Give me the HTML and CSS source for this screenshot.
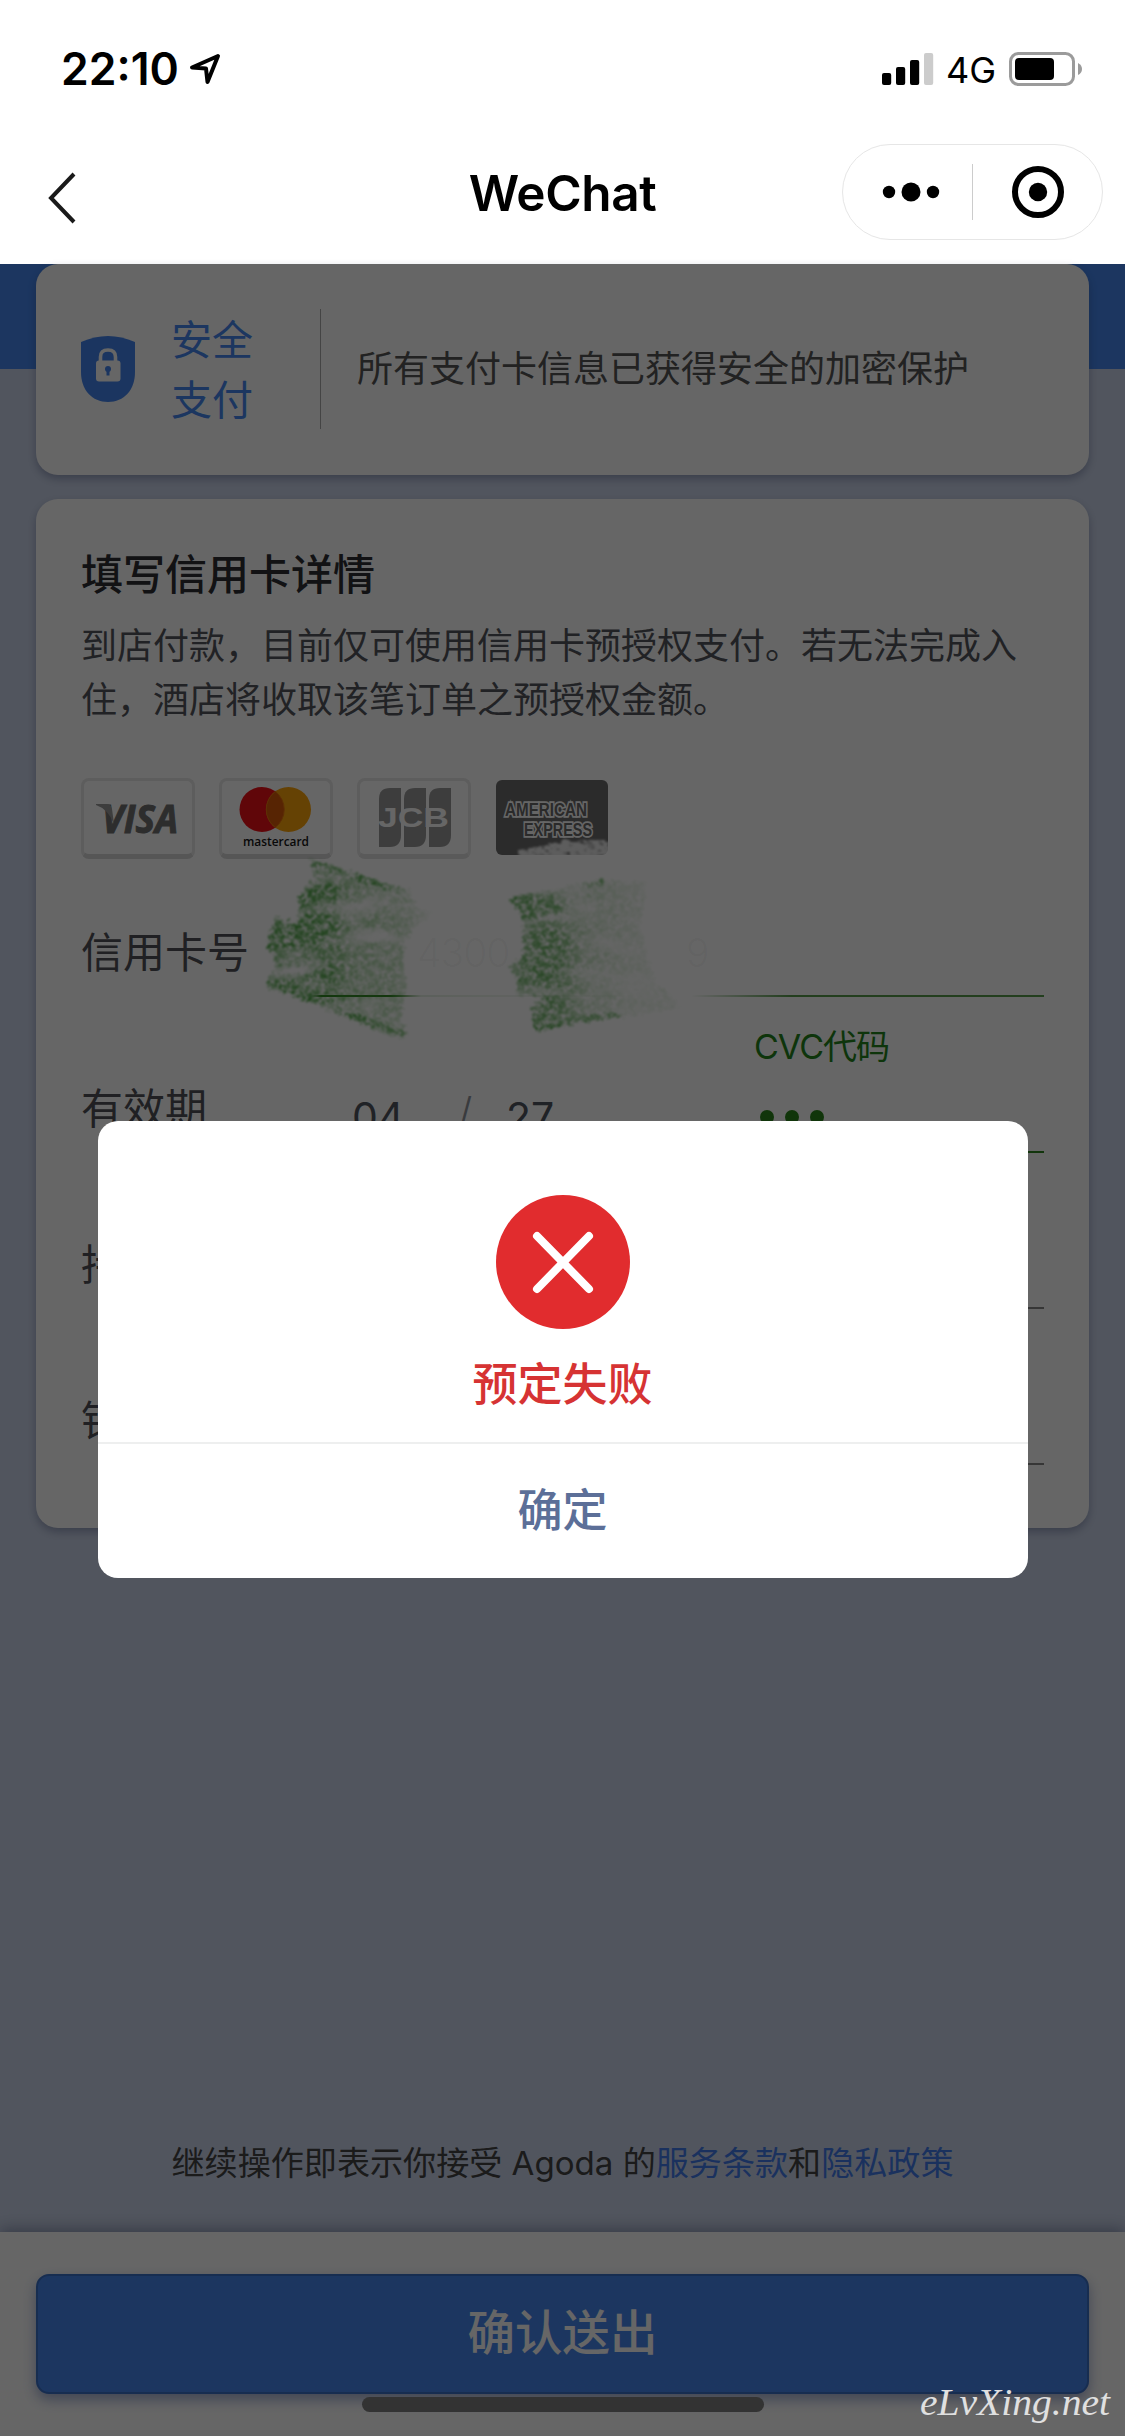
FILE: index.html
```html
<!DOCTYPE html>
<html lang="zh-CN">
<head>
<meta charset="utf-8">
<title>WeChat</title>
<link rel="stylesheet" href="styles.css">
</head>
<body>
<div class="screen">
  <header class="top">
    <div class="status">
      <div class="status-left">
        <span class="time">22:10</span>
        <svg class="locate" width="34" height="34" viewBox="0 0 34 34"><path d="M30 4 L4 15.500 L18 16.500 L19.500 30 Z" fill="none" stroke="#000" stroke-width="4" stroke-linejoin="round"/></svg>
      </div>
      <div class="status-right">
        <svg width="52" height="34" viewBox="0 0 52 34"><rect x="0" y="21" width="9.200" height="12" rx="2"/><rect x="14" y="15" width="9.200" height="18" rx="2"/><rect x="28" y="8" width="9.200" height="25" rx="2"/><rect x="42" y="1" width="9.200" height="32" rx="2" fill="#ccc"/></svg>
        <span class="network">4G</span>
        <svg width="76" height="34" viewBox="0 0 76 34"><rect x="1.500" y="1.500" width="63" height="31" rx="8" fill="none" stroke="#9b9b9b" stroke-width="3"/><rect x="6" y="6" width="39" height="22" rx="4"/><path d="M69 11 Q73 13 73 17 Q73 21 69 23 Z" fill="#9b9b9b"/></svg>
      </div>
    </div>
    <nav class="nav">
      <svg class="back" width="32" height="54" viewBox="0 0 32 54"><path d="M28 3 L5 27 L28 51" fill="none" stroke="#1a1a1a" stroke-width="4"/></svg>
      <h1 class="title">WeChat</h1>
      <div class="capsule">
        <svg class="more" width="58" height="20" viewBox="0 0 58 20"><circle cx="7" cy="10" r="6.200"/><circle cx="29" cy="10" r="9.500"/><circle cx="51" cy="10" r="6.200"/></svg>
        <span class="capsule-line"></span>
        <svg class="target" width="54" height="54" viewBox="0 0 54 54"><circle cx="27" cy="27" r="23" fill="none" stroke="#000" stroke-width="6"/><circle cx="27" cy="27" r="9.200"/></svg>
      </div>
    </nav>
  </header>

  <main class="content">
    <section class="card secure">
      <svg class="shield" width="54" height="66" viewBox="0 0 54 66"><path d="M0 6 Q27 -6 54 6 V36 C54 54 43 66 27 66 C11 66 0 54 0 36 Z" fill="#4485ef"/><rect x="15" y="24.500" width="24.500" height="21" rx="3" fill="#fff"/><path d="M19.500 26 V21 Q19.500 14 27 14 Q34.500 14 34.500 21 V26" fill="none" stroke="#fff" stroke-width="3.600"/><circle cx="27" cy="33" r="3" fill="#4485ef"/><rect x="25.500" y="33" width="3" height="6.500" fill="#4485ef"/></svg>
      <div class="secure-name">安全<br>支付</div>
      <p class="secure-text">所有支付卡信息已获得安全的加密保护</p>
    </section>

    <section class="card details">
      <h2 class="heading">填写信用卡详情</h2>
      <p class="intro">到店付款，目前仅可使用信用卡预授权支付。若无法完成入住，酒店将收取该笔订单之预授权金额。</p>
      <div class="brands">
        <div class="brand">
          <svg width="108" height="74" viewBox="0 0 108 74"><text x="18" y="51.500" class="visa" textLength="76" lengthAdjust="spacingAndGlyphs">VISA</text><path d="M12 23 H22 Q27 23 28 28 L30 43 Q24 28 12 24 Z" fill="#999"/></svg>
        </div>
        <div class="brand">
          <svg width="108" height="74" viewBox="0 0 108 74"><circle cx="40" cy="28.500" r="22.500" fill="#f01018"/><circle cx="66.500" cy="28.500" r="22.500" fill="#fda50c"/><path d="M53.250 10.500 A22.500 22.500 0 0 1 53.250 46.500 A22.500 22.500 0 0 1 53.250 10.500 Z" fill="#d95a08" stroke="#e8740c" stroke-width="1"/><text x="21" y="64.500" class="mastercard" textLength="66" lengthAdjust="spacingAndGlyphs">mastercard</text></svg>
        </div>
        <div class="brand worn">
          <svg width="108" height="74" viewBox="0 0 108 74"><g fill="#999"><path d="M19 18 Q19 7 30 7 H41 V54 Q41 66 30 66 H19 Z"/><path d="M44 18 Q44 7 55 7 H66 V54 Q66 66 55 66 H44 Z"/><path d="M69 18 Q69 7 80 7 H91 V54 Q91 66 80 66 H69 Z"/></g><text x="18" y="46" class="jcb" textLength="71" lengthAdjust="spacingAndGlyphs">JCB</text></svg>
        </div>
        <div class="brand amex">
          <svg width="112" height="80" viewBox="0 0 112 80"><defs><filter id="wear" x="-10%" y="-30%" width="120%" height="160%" color-interpolation-filters="sRGB"><feTurbulence type="fractalNoise" baseFrequency=".12 .3" numOctaves="3" seed="8" result="n"/><feColorMatrix in="n" type="matrix" values="0 0 0 0 0  0 0 0 0 0  0 0 0 0 0  0 0 0 4 -.8" result="m"/><feComposite in="SourceGraphic" in2="m" operator="in" result="c"/><feDisplacementMap in="c" in2="n" scale="10" result="d"/><feGaussianBlur in="d" stdDeviation=".9"/></filter></defs><rect width="112" height="75" rx="6" fill="#6c6c6c"/><g class="amex-text"><text x="9" y="36" textLength="82" lengthAdjust="spacingAndGlyphs">AMERICAN</text><text x="28" y="55.500" textLength="68" lengthAdjust="spacingAndGlyphs">EXPRESS</text></g><path d="M24 70 L48 66 L64 61 L114 62 V82 H22 Z" fill="#fff" opacity=".85" filter="url(#wear)"/></svg>
        </div>
      </div>

      <div class="form">
        <div class="row number">
          <span class="label">信用卡号</span>
          <span class="digits">4300</span><span class="digits last">9</span>
          <svg class="scribble" width="460" height="200" viewBox="250 850 460 200">
            <defs>
              <filter id="chalk" x="-5%" y="-5%" width="110%" height="110%" color-interpolation-filters="sRGB">
                <feTurbulence type="fractalNoise" baseFrequency=".24 .28" numOctaves="3" seed="5" result="n"/>
                <feColorMatrix in="n" type="matrix" values="0 0 0 0 0  0 0 0 0 0  0 0 0 0 0  0 0 0 4.500 -1.650" result="m"/>
                <feTurbulence type="fractalNoise" baseFrequency=".015 .06" numOctaves="2" seed="11" result="w"/>
                <feColorMatrix in="w" type="matrix" values="0 0 0 0 0  0 0 0 0 0  0 0 0 0 0  0 0 0 3 -.55" result="bands"/>
                <feComposite in="SourceGraphic" in2="m" operator="in" result="c"/>
                <feComposite in="c" in2="bands" operator="in" result="b"/>
                <feDisplacementMap in="b" in2="n" scale="10" xChannelSelector="R" yChannelSelector="G" result="d"/>
                <feGaussianBlur in="d" stdDeviation=".8"/>
              </filter>
              <linearGradient id="fadeA" gradientUnits="userSpaceOnUse" x1="266" y1="0" x2="434" y2="0"><stop offset="0" stop-color="#36992c" stop-opacity=".9"/><stop offset=".38" stop-color="#36992c" stop-opacity=".85"/><stop offset=".5" stop-color="#48a33d" stop-opacity=".5"/><stop offset=".8" stop-color="#48a33d" stop-opacity=".38"/><stop offset="1" stop-color="#48a33d" stop-opacity="0"/></linearGradient>
              <linearGradient id="fadeB" gradientUnits="userSpaceOnUse" x1="508" y1="0" x2="682" y2="0"><stop offset="0" stop-color="#3b9931" stop-opacity=".8"/><stop offset=".28" stop-color="#3b9931" stop-opacity=".75"/><stop offset=".45" stop-color="#58a94d" stop-opacity=".32"/><stop offset=".7" stop-color="#58a94d" stop-opacity=".16"/><stop offset="1" stop-color="#58a94d" stop-opacity=".1"/></linearGradient>
            </defs>
            <g filter="url(#chalk)">
              <path fill="url(#fadeA)" d="M310 859 L345 870 L409 890 L416 908 L434 912 L412 930 L403 948 L406 990 L401 1018 L408 1036 L400 1040 L266 984 L276 966 L267 944 L276 916 L299 925 L298 900 L314 878 Z"/>
              <path fill="none" stroke="#36992c" stroke-opacity=".75" stroke-width="6" d="M311 862 L345 873 L405 893 M268 984 L335 1008 L404 1036"/>
              <path fill="url(#fadeB)" d="M508 900 L560 890 L607 881 L647 882 L640 930 L655 982 L666 990 L680 1008 L535 1030 L530 1008 L544 997 L516 995 L518 980 L508 967 L524 955 L523 915 Z"/>
              <path fill="none" stroke="#3b9931" stroke-opacity=".55" stroke-width="6" d="M510 901 L560 891 L605 882 M536 1029 L580 1020 L620 1013"/>
            </g>
          </svg>
        </div>
        <div class="row expiry">
          <span class="label">有效期</span>
          <span class="month">04</span><span class="slash">/</span><span class="year">27</span>
          <div class="cvc"><span class="cvc-label">CVC代码</span><span class="cvc-dots"><i></i><i></i><i></i></span></div>
        </div>
        <div class="row"><span class="label">持卡人</span></div>
        <div class="row"><span class="label">银行</span></div>
      </div>
    </section>

    <p class="terms">继续操作即表示你接受 Agoda 的<a>服务条款</a>和<a>隐私政策</a></p>
  </main>

  <footer class="bottom"><button class="submit">确认送出</button></footer>

  <div class="mask">
    <div class="dialog" role="alertdialog">
      <div class="dialog-body">
        <svg width="134" height="134" viewBox="0 0 134 134"><circle cx="67" cy="67" r="67" fill="#e12c2e"/><path d="M41 41 L93 94 M93 41 L41 94" stroke="#fff" stroke-width="8" stroke-linecap="round"/></svg>
        <p class="message">预定失败</p>
      </div>
      <button class="confirm">确定</button>
    </div>
  </div>
  <div class="home"></div>
  <svg class="watermark" width="200" height="60" viewBox="0 0 200 60"><text x="4" y="39" textLength="190" lengthAdjust="spacingAndGlyphs">eLvXing.net</text></svg>
</div>
</body>
</html>
```
FILE: styles.css
```css
* { box-sizing: border-box; }
body, h1, h2, p { margin: 0; }
body { font-family: Inter, "Noto Sans CJK SC", sans-serif; background: #fff; }
svg { display: block; flex: none; }
button { border: 0; padding: 0; font-family: inherit; }

.screen { position: relative; width: 1125px; height: 2436px; overflow: hidden; display: flex; flex-direction: column; }

.top { height: 264px; flex: none; background: #fff; }
.status { height: 132px; padding: 52px 40px 0 61px; display: flex; justify-content: space-between; align-items: flex-start; }
.status-left, .status-right { display: flex; align-items: center; height: 34px; }
.time { font-size: 44.500px; font-weight: 600; line-height: 34px; width: 127px; }
.status-right { gap: 14px; }
.network { font-size: 36px; line-height: 34px; width: 49px; margin: 2px 0 0 -2px; }
.nav { height: 120px; padding: 0 22px 0 46px; display: grid; grid-template-columns: 1fr auto 1fr; align-items: center; }
.back { margin-top: 12px; }
.title { font-size: 49.500px; font-weight: 600; line-height: 60px; letter-spacing: -0.400px; padding-right: 24px; margin-top: 1px; }
.capsule { justify-self: end; width: 261px; height: 96px; border: 1px solid #e6e6e6; border-radius: 49px; display: flex; align-items: center; justify-content: space-between; padding: 0 37px 0 39px; }
.capsule-line { width: 1px; height: 56px; background: #ccc; margin-left: -7px; }

.content { flex: 1; display: flex; flex-direction: column; padding: 0 36px; background: linear-gradient(#4688f0 105px, #cbd5eb 105px); }
.card { background: #fff; border-radius: 22px; box-shadow: 0 4px 9px rgba(35, 45, 90, .32); }
.secure { height: 211px; display: flex; align-items: center; padding: 0 45px 2px; }
.secure-name { width: 150px; height: 120px; margin-left: 36px; padding-top: 1px; font-size: 41px; line-height: 60px; color: #4688f1; border-right: 1.500px solid #aaa; }
.secure-text { margin-left: 36px; font-size: 36px; line-height: 54px; color: #555; white-space: nowrap; }

.details { margin-top: 24px; height: 1029px; padding: 46px 44px 0 45px; }
.heading { font-size: 42px; line-height: 60px; font-weight: 500; color: #2d2e33; }
.intro { margin-top: 14px; font-size: 36px; line-height: 54px; width: 940px; color: #54565c; }
.brands { display: flex; gap: 24px; margin-top: 51px; }
.brand { width: 114px; height: 81px; border: 3px solid #e8e8e8; border-bottom: 5px solid #d6d6d6; border-radius: 8px; }
.worn { border-bottom-color: #e2e2e2; }
.amex { border: 0; padding: 2px 1px 0; }
.visa { font: italic 700 40px "Open Sans", sans-serif; fill: #707070; stroke: #707070; stroke-width: 1; }
.mastercard { font: 600 13px "Open Sans", sans-serif; fill: #161616; }
.jcb { font: 700 27px "Liberation Sans", sans-serif; fill: #fff; }
.amex-text { font: 700 18px "Liberation Sans", sans-serif; fill: #6a6a6a; stroke: #fff; stroke-width: 3.600; paint-order: stroke; }

.form { margin-top: -18px; }
.row { position: relative; height: 156px; display: flex; align-items: flex-end; padding-bottom: 14px; background: linear-gradient(90deg, transparent 271px, #888 271px) bottom left / 963px 2px no-repeat; }
.label { font-size: 42px; line-height: 60px; color: #515257; width: 271px; white-space: nowrap; }
.number { background-image: linear-gradient(90deg, transparent 230px, #2f8420 240px, #2f8420 310px, rgba(47, 132, 32, .12) 340px, transparent 560px, transparent 610px, rgba(47, 132, 32, .8) 710px); }
.expiry { background-image: linear-gradient(90deg, transparent 271px, #2f8420 271px); }
.digits { font-size: 39px; font-weight: 300; line-height: 60px; letter-spacing: -1px; color: rgba(0, 0, 0, .045); width: 200px; margin-left: 65px; }
.digits.last { margin-left: 69px; }
.scribble { position: absolute; left: 169px; top: 9px; }
.month, .year, .slash { font-size: 41px; line-height: 46px; color: #505560; margin-bottom: -1px; }
.month { width: 106px; }
.slash { width: 49px; color: #90949c; font-weight: 300; margin-bottom: 4px; }
.year { width: 246px; margin-left: -1px; }
.cvc { align-self: stretch; padding-top: 25px; color: #25851d; margin-left: 2px; }
.cvc-label { display: block; font-size: 34px; line-height: 50px; letter-spacing: -1px; }
.cvc-dots { display: flex; gap: 11px; padding: 38px 0 0 6px; }
.cvc-dots i { width: 14px; height: 14px; border-radius: 50%; background: #2a841a; }

.terms { margin-top: auto; margin-bottom: 44px; font-size: 33.100px; line-height: 50px; text-align: center; color: #444; white-space: nowrap; }
.terms a { color: #427bea; }
.bottom { position: relative; flex: none; height: 204px; padding: 42px 36px 0; background: #fff; box-shadow: 0 -3px 14px rgba(30, 40, 80, .38); }
.submit { display: block; width: 100%; height: 120px; border-radius: 13px; background: #4688f0; border: 2px solid #3b70c8; color: #fff; font-size: 47.500px; font-weight: 500; line-height: 112px; padding-bottom: 3px; box-shadow: 0 6px 13px rgba(50, 80, 160, .45); }

.mask { position: absolute; inset: 264px 0 0; background: rgba(0, 0, 0, .6); padding-top: 857px; }
.dialog { width: 930px; height: 457px; margin: 0 auto; border-radius: 20px; background: #fff; overflow: hidden; }
.dialog-body { height: 323px; padding-top: 74px; display: flex; flex-direction: column; align-items: center; border-bottom: 2px solid #eeefef; }
.message { margin-top: 26px; font-size: 45px; line-height: 60px; font-weight: 500; color: #d63333; }
.confirm { display: block; width: 100%; height: 134px; padding-bottom: 7px; background: none; color: #5c6f98; font-size: 45px; font-weight: 500; }
.home { position: absolute; left: 362px; bottom: 24px; width: 402px; height: 15px; border-radius: 8px; background: #333; }
.watermark { position: absolute; left: 916px; top: 2376px; font: italic 38px "Liberation Serif", serif; fill: #e0e0e0; }
```
